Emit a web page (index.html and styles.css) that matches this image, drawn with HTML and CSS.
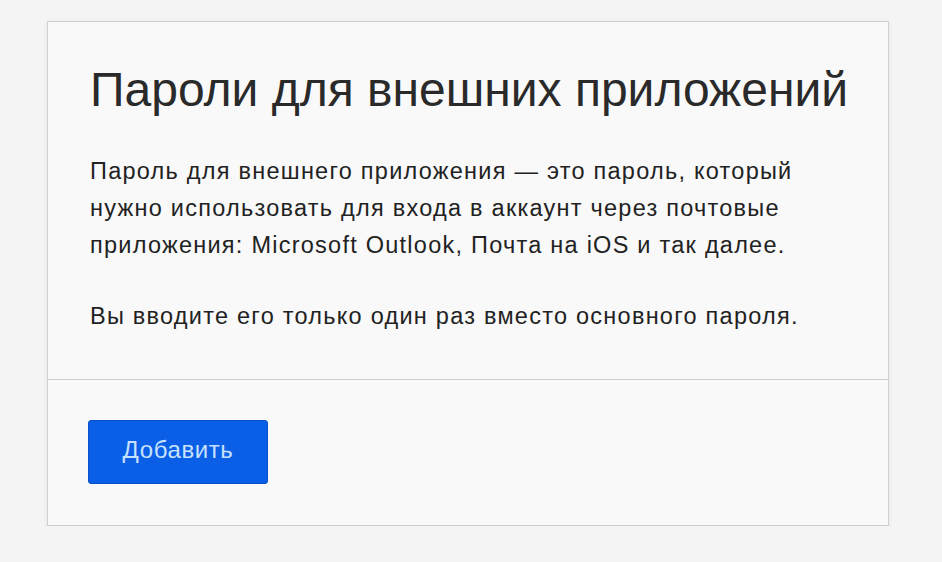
FILE: index.html
```html
<!DOCTYPE html>
<html lang="ru">
<head>
  <meta charset="UTF-8" />
  <meta name="viewport" content="width=device-width, initial-scale=1.0"/>
  <title>Пароли для внешних приложений</title>
  <link rel="stylesheet" href="styles.css">
</head>
<body>
  <div class="card">
    <div class="card-body">
      <h1 class="card-title">Пароли для внешних приложений</h1>
      <p class="card-text">Пароль для внешнего приложения — это пароль, который<br>нужно использовать для входа в аккаунт через почтовые<br>приложения: Microsoft Outlook, Почта на iOS и так далее.</p>
      <p class="card-text">Вы вводите его только один раз вместо основного пароля.</p>
    </div>
    <div class="card-footer">
      <button class="add-btn">Добавить</button>
    </div>
  </div>
</body>
</html>
```

FILE: styles.css
```css
* { margin: 0; padding: 0; box-sizing: border-box; }

body {
  font-family: 'Liberation Sans', Arial, sans-serif;
  background: #f4f4f4;
  color: #222;
  padding: 21px 54px 0 47px;
}

.card {
  width: 842px;
  height: 505px;
  background: #f9f9f9;
  border: 1px solid #cfcfcf;
  box-shadow: 0 2px 6px rgba(0, 0, 0, 0.06);
  display: flex;
  flex-direction: column;
}

.card-body {
  padding: 42px 30px 0 42px;
  height: 358px;
  border-bottom: 1px solid #cdcdcd;
}

.card-title {
  font-size: 48px;
  font-weight: normal;
  color: #2a2a2a;
  line-height: 52px;
  margin-bottom: 37px;
}

.card-text {
  font-size: 23.5px;
  letter-spacing: 1.25px;
  line-height: 37px;
  margin-bottom: 34px;
  white-space: nowrap;
}

.card-footer {
  padding: 40px 40px 0 40px;
}

.add-btn {
  width: 180px;
  height: 64px;
  background: #0b5fe6;
  border: 1px solid #0a50c8;
  border-radius: 3px;
  color: #c6e2ff;
  font-family: inherit;
  font-size: 24px;
  letter-spacing: 0.6px;
  padding-bottom: 4px;
}
```
